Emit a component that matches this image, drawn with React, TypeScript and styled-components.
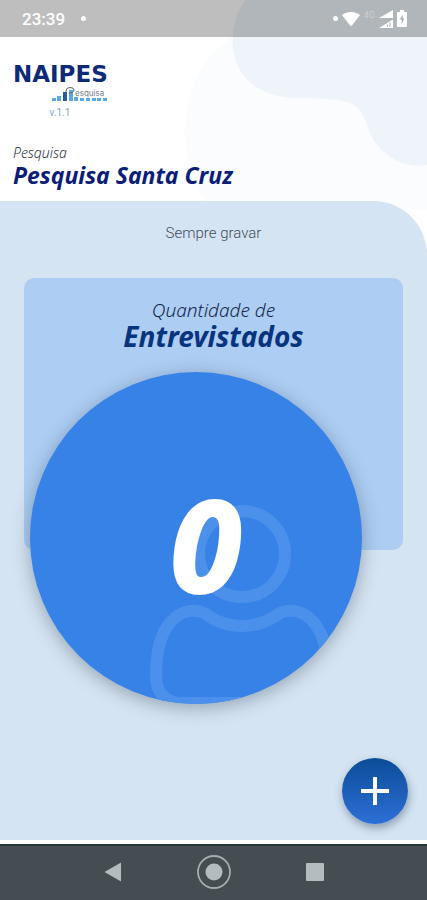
import React from "react";
import styled, { createGlobalStyle } from "styled-components";

const GlobalStyle = createGlobalStyle`
  *, *::before, *::after { box-sizing: border-box; }
  body { margin: 0; background: #fff; font-family: Roboto, sans-serif; }
  h1, h2, p { margin: 0; }
  button { border: 0; padding: 0; background: none; cursor: pointer; }
  svg { display: block; }
`;

const humanist = `"Noto Sans", "Open Sans", sans-serif`;

const Screen = styled.div`
  position: relative;
  display: flex;
  flex-direction: column;
  min-height: 100vh;
  overflow: hidden;
`;

const Backdrop = styled.svg`
  position: absolute;
  top: 0;
  right: 0;
  z-index: -1;
`;

const StatusBar = styled.div`
  display: flex;
  align-items: center;
  justify-content: space-between;
  height: 37px;
  padding: 0 20px 0 22px;
  background: rgba(0, 0, 0, 0.255);
  color: #fff;
`;

const StatusGroup = styled.div<{ $gap: number }>`
  display: flex;
  align-items: center;
  gap: ${(p) => p.$gap}px;
`;

const Clock = styled.time`
  font-size: 17px;
  font-weight: 500;
  line-height: 20px;
`;

const Dot = styled.span`
  width: 5px;
  height: 5px;
  border-radius: 50%;
  background: #fff;
`;

const Network = styled.span`
  align-self: flex-start;
  font-size: 9px;
  line-height: 10px;
  opacity: 0.35;
`;

const Header = styled.header`
  display: flex;
  flex-direction: column;
  align-items: flex-start;
  height: 164px;
  padding: 24px 13px 0;
`;

const Brand = styled.div`
  display: flex;
  flex-direction: column;
  width: 94px;
`;

const Wordmark = styled.span`
  font: 700 23px/26px "DejaVu Sans", sans-serif;
  color: #0d2a78;
`;

const SubMark = styled.div`
  display: flex;
  justify-content: flex-end;
`;

const Version = styled.span`
  align-self: center;
  font-size: 10px;
  line-height: 12px;
  margin-top: 4px;
  color: #7fa5e0;
`;

const SurveyLabel = styled.p`
  margin-top: 24px;
  font: italic 300 14px/20px ${humanist};
  color: #2d3340;
`;

const SurveyName = styled.h1`
  font: italic 700 23px/24px ${humanist};
  color: #0a1d78;
`;

const Panel = styled.main`
  display: flex;
  flex: 1;
  flex-direction: column;
  margin-bottom: 4px;
  padding: 22px 24px 16px;
  border-top-right-radius: 54px;
  background: #d5e4f2;
`;

const Recording = styled.p`
  align-self: center;
  font-size: 15px;
  font-weight: 300;
  line-height: 20px;
  color: #3f4b5c;
`;

const Card = styled.section`
  display: flex;
  flex-direction: column;
  height: 272px;
  margin: 35px 0 154px;
  padding-top: 20px;
  border-radius: 10px;
  background: #adcdf2;
`;

const CardLabel = styled.p`
  text-align: center;
  font: italic 300 19px/24px ${humanist};
  color: #14284d;
`;

const CardTitle = styled.h2`
  text-align: center;
  font: italic 700 28px/28px ${humanist};
  color: #07347e;
`;

const Counter = styled.div`
  position: relative;
  display: flex;
  flex-shrink: 0;
  align-items: center;
  justify-content: center;
  width: 332px;
  height: 332px;
  margin: 22px 0 0 6px;
  padding: 12px 0 0 20px;
  border-radius: 50%;
  overflow: hidden;
  background: #3782e7;
  box-shadow: 0 4px 18px rgba(30, 50, 70, 0.36);
`;

const PersonMark = styled.svg`
  position: absolute;
  inset: 0;
`;

const Count = styled.output`
  position: relative;
  font: italic 800 130px/150px ${humanist};
  color: #fff;
`;

const AddButton = styled.button`
  display: flex;
  align-items: center;
  justify-content: center;
  align-self: flex-end;
  width: 66px;
  height: 66px;
  margin-top: auto;
  margin-right: -5px;
  border-radius: 50%;
  background: linear-gradient(#0b4c98, #2d70d6);
  box-shadow: 1px 4px 8px rgba(30, 50, 80, 0.4);
`;

const NavBar = styled.nav`
  display: flex;
  align-items: center;
  justify-content: center;
  gap: 66px;
  height: 56px;
  padding-bottom: 2px;
  border-top: 2px solid #24383a;
  background: #454d53;
`;

const NavButton = styled.button`
  display: flex;
  align-items: center;
  justify-content: center;
  width: 35px;
  height: 36px;
`;

export default function App() {
  return (
    <Screen>
      <GlobalStyle />
      <Backdrop width="245" height="260" viewBox="0 0 245 260" aria-hidden="true">
        <path
          d="M245 210C225 206 205 214 192 230C160 262 40 240 14 186C-8 140 2 74 40 46C54 34 70 10 80 0H245Z"
          fill="#fafcfe"
        />
        <path
          d="M64 0C48 18 48 48 56 66C65 86 88 98 114 98C136 99 166 97 177 109C187 120 184 137 203 153C216 164 231 167 245 165V0Z"
          fill="#eef4fa"
        />
      </Backdrop>

      <StatusBar>
        <StatusGroup $gap={16}>
          <Clock>23:39</Clock>
          <Dot />
        </StatusGroup>
        <StatusGroup $gap={4}>
          <Dot />
          <svg width="18" height="16" viewBox="0 0 18 16" fill="#fff" aria-label="Wi-Fi">
            <path d="M0 4C5 0 13 0 18 4L10 14.500Q9 15.500 8 14.500Z" />
          </svg>
          <Network>4G</Network>
          <svg width="14" height="18" viewBox="0 0 14 18" fill="#fff" aria-label="Sinal">
            <path d="M14 0V8H0ZM14 9.500V18H0Z" />
            <path d="M8.500 14.500V17M11 12.500V17" stroke="#b2b6b9" strokeWidth="1" />
          </svg>
          <svg width="10" height="17" viewBox="0 0 10 17" aria-label="Bateria">
            <path d="M3 0H7V2H9Q10 2 10 3V16Q10 17 9 17H1Q0 17 0 16V3Q0 2 1 2H3Z" fill="#fff" />
            <path d="M5.500 4.500L3 9.500H4.800L4.500 14L7.300 8.500H5.500Z" fill="#a5a9ac" />
          </svg>
        </StatusGroup>
      </StatusBar>

      <Header>
        <Brand>
          <Wordmark>NAIPES</Wordmark>
          <SubMark>
            <svg width="56" height="16" viewBox="0 0 56 16" role="img" aria-label="Pesquisa">
              <g fill="#58a8e6">
                <rect x="1" y="11" width="4" height="3" />
                <rect x="6" y="9" width="4" height="5" />
                <rect x="18" y="3" width="4" height="11" />
                <rect x="23" y="10" width="4" height="4" />
                <rect x="29" y="11" width="4" height="3" />
                <rect x="35" y="11" width="4" height="3" />
                <rect x="41" y="11" width="4" height="3" />
                <rect x="46" y="11" width="4" height="3" />
                <rect x="52" y="11" width="4" height="3" />
              </g>
              <rect x="12" y="5" width="4" height="9" fill="#1e5caa" />
              <path d="M15 13V4Q15 0.500 19 0.500Q23 0.500 23 3Q23 6 18 6" fill="none" stroke="#56616d" strokeWidth="1" />
              <text x="24" y="9" fontFamily="Inter, sans-serif" fontSize="8" fill="#737e8a">
                esquisa
              </text>
            </svg>
          </SubMark>
          <Version>v.1.1</Version>
        </Brand>
        <SurveyLabel>Pesquisa</SurveyLabel>
        <SurveyName>Pesquisa Santa Cruz</SurveyName>
      </Header>

      <Panel>
        <Recording>Sempre gravar</Recording>
        <Card>
          <CardLabel>Quantidade de</CardLabel>
          <CardTitle>Entrevistados</CardTitle>
          <Counter>
            <PersonMark viewBox="0 0 332 332" fill="none" stroke="#4b91eb" strokeWidth="12" aria-hidden="true">
              <circle cx="212" cy="182" r="43" />
              <path d="M212 254C195 254 184 248 174 241C166 237 155 238 146 245C130 257 126 280 126 304C126 322 137 331 152 331H272C287 331 298 322 298 304C298 280 294 257 278 245C269 238 258 237 250 241C240 248 229 254 212 254Z" />
            </PersonMark>
            <Count>0</Count>
          </Counter>
        </Card>
        <AddButton type="button" aria-label="Adicionar">
          <svg width="30" height="30" viewBox="0 0 30 30" stroke="#fff" strokeWidth="4">
            <path d="M15 1V29M1 15H29" />
          </svg>
        </AddButton>
      </Panel>

      <NavBar aria-label="Sistema">
        <NavButton type="button" aria-label="Voltar">
          <svg width="18" height="20" viewBox="0 0 18 20" fill="#b5bcbf">
            <path d="M17 0.500V19.500L0.500 10Z" />
          </svg>
        </NavButton>
        <NavButton type="button" aria-label="Início">
          <svg width="34" height="34" viewBox="0 0 34 34">
            <circle cx="17" cy="17" r="16" fill="none" stroke="#a5acaf" strokeWidth="1.800" />
            <circle cx="17" cy="17" r="8.500" fill="#b5bcbf" />
          </svg>
        </NavButton>
        <NavButton type="button" aria-label="Recentes">
          <svg width="18" height="18" viewBox="0 0 18 18">
            <rect width="18" height="18" rx="1" fill="#b5bcbf" />
          </svg>
        </NavButton>
      </NavBar>
    </Screen>
  );
}
